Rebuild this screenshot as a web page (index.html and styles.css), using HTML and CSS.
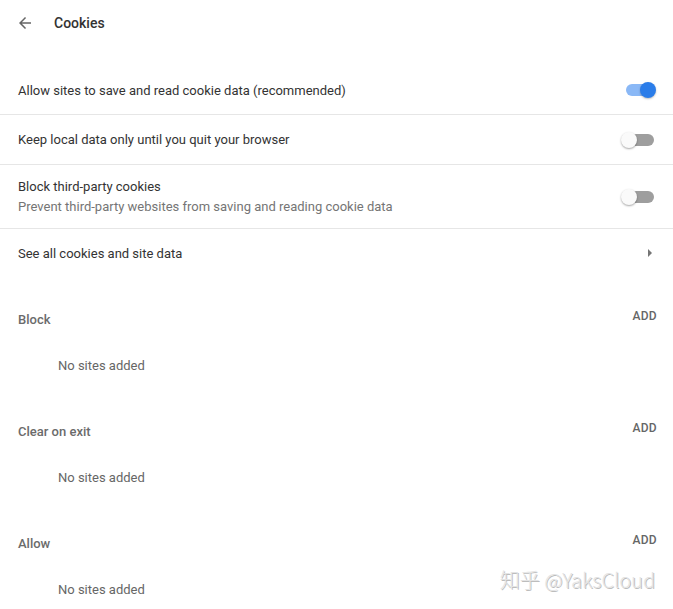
FILE: index.html
```html
<!DOCTYPE html>
<html>
<head>
<meta charset="utf-8">
<link rel="stylesheet" href="styles.css">
</head>
<body>
<div class="page">
  <header class="header">
    <svg class="back" viewBox="0 0 24 24" width="18" height="18"><path d="M20 11H7.83l5.59-5.59L12 4l-8 8 8 8 1.41-1.41L7.83 13H20v-2z"/></svg>
    <span class="title">Cookies</span>
  </header>
  <div class="list">
    <div class="row">
      <span class="label">Allow sites to save and read cookie data (recommended)</span>
      <span class="toggle on"><span class="bar"></span><span class="knob"></span></span>
    </div>
    <div class="row second">
      <span class="label">Keep local data only until you quit your browser</span>
      <span class="toggle"><span class="bar"></span><span class="knob"></span></span>
    </div>
    <div class="row tall">
      <div class="texts">
        <span class="label">Block third-party cookies</span>
        <span class="sub">Prevent third-party websites from saving and reading cookie data</span>
      </div>
      <span class="toggle"><span class="bar"></span><span class="knob"></span></span>
    </div>
    <div class="row last">
      <span class="label">See all cookies and site data</span>
      <span class="chevron"></span>
    </div>
  </div>
  <section class="section">
    <div class="sec-head"><span class="sec-title">Block</span><span class="add">ADD</span></div>
    <div class="empty">No sites added</div>
  </section>
  <section class="section">
    <div class="sec-head"><span class="sec-title">Clear on exit</span><span class="add">ADD</span></div>
    <div class="empty">No sites added</div>
  </section>
  <section class="section">
    <div class="sec-head"><span class="sec-title">Allow</span><span class="add">ADD</span></div>
    <div class="empty">No sites added</div>
  </section>
  <div class="watermark">知乎 @YaksCloud</div>
</div>
</body>
</html>
```
FILE: styles.css
```css
html, body {
  margin: 0;
  padding: 0;
  background: #fff;
}
body {
  font-family: Roboto, "Noto Sans CJK SC", sans-serif;
  font-size: 13px;
  color: #333;
  overflow: hidden;
}
.page {
  position: relative;
  width: 673px;
  height: 609px;
  overflow: hidden;
}
.header {
  height: 45px;
  display: flex;
  align-items: center;
  padding-left: 16px;
}
.back {
  fill: #666;
  margin-right: 20px;
}
.title {
  font-size: 14px;
  font-weight: 500;
  color: #333;
}
.list {
  margin-top: 21px;
}
.row {
  height: 49px;
  box-sizing: border-box;
  border-bottom: 1px solid #e6e6e6;
  display: flex;
  align-items: center;
  justify-content: space-between;
  padding: 0 16px 0 18px;
}
.row.second {
  height: 50px;
}
.row.tall {
  height: 64px;
}
.row.last {
  height: 48px;
  border-bottom: none;
  padding-right: 21px;
}
.texts {
  display: flex;
  flex-direction: column;
  line-height: 20px;
}
.sub {
  color: #757575;
}
.toggle {
  position: relative;
  width: 36px;
  height: 16px;
  display: block;
}
.toggle .bar {
  position: absolute;
  left: 5px;
  top: 2px;
  width: 28px;
  height: 12px;
  border-radius: 6px;
  background: #9e9e9e;
}
.toggle .knob {
  position: absolute;
  left: 0;
  top: 0;
  width: 16px;
  height: 16px;
  border-radius: 50%;
  background: #fafafa;
  box-shadow: 0 1px 2px rgba(0,0,0,0.35);
}
.toggle.on .bar {
  background: #8ab8f6;
}
.toggle.on .knob {
  left: 19px;
  background: #2b7de9;
  box-shadow: 0 1px 2px rgba(0,0,0,0.25);
}
.chevron {
  width: 0;
  height: 0;
  border-top: 4px solid transparent;
  border-bottom: 4px solid transparent;
  border-left: 4px solid #757575;
}
.section {
  padding-top: 22px;
}
.sec-head {
  height: 40px;
  display: flex;
  justify-content: space-between;
  padding: 0 16px 0 18px;
  align-items: center;
}
.sec-title {
  font-weight: 500;
  color: #6b6b6b;
}
.add {
  align-self: flex-start;
  line-height: 34px;
  font-size: 12px;
  font-weight: 500;
  color: #666;
  letter-spacing: 0.3px;
}
.empty {
  padding: 15px 0 11px 58px;
  line-height: 24px;
  color: #666;
}
.watermark {
  position: absolute;
  right: 18px;
  top: 566px;
  font-size: 20px;
  font-family: "Noto Sans CJK SC", "Liberation Sans", sans-serif;
  font-weight: 300;
  color: #e4e4e4;
  text-shadow: 1px 1px 0 #bdbdbd;
  line-height: 28px;
}
```
